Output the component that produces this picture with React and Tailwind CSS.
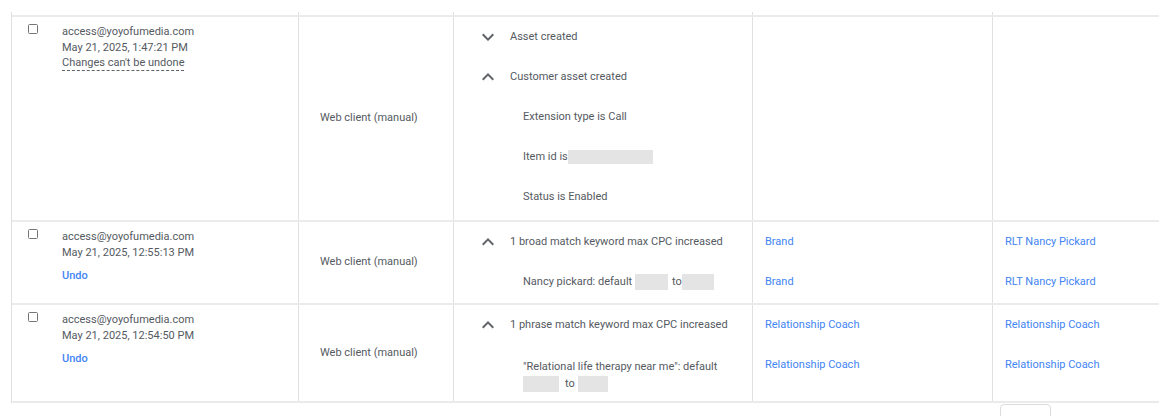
import React from 'react';

const ExpandMore = () => (
  <svg viewBox="0 0 24 24" className="w-6 h-6 fill-[#5f6368]">
    <path d="M16.59 8.59L12 13.17 7.41 8.59 6 10l6 6 6-6z" />
  </svg>
);

const ExpandLess = () => (
  <svg viewBox="0 0 24 24" className="w-6 h-6 fill-[#5f6368]">
    <path d="M12 8l-6 6 1.41 1.41L12 10.83l4.59 4.58L18 14z" />
  </svg>
);

const Redacted = ({ w, h = 'h-[16px]' }) => <span className={`inline-block align-middle bg-[#e4e4e4] ${w} ${h}`}></span>;

const Checkbox = () => <div className="w-[10px] h-[10px] mt-[2px] rounded-[1.5px] border border-[#757575] bg-white shrink-0"></div>;

const UserCell = ({ date, undoable }) => (
  <div className="border-r border-[#e0e0e0] flex pt-[5px] pl-[16px]">
    <Checkbox />
    <div className="ml-[24px] mt-[2px] leading-[16px]">
      <div>access@yoyofumedia.com</div>
      <div>{date}</div>
      {undoable ? (
        <div className="mt-[7px] text-[#4285f4] font-medium">Undo</div>
      ) : (
        <div className="leading-[14px]">
          <span className="border-b border-dashed border-[#5f6368] pb-[1px]">Changes can't be undone</span>
        </div>
      )}
    </div>
  </div>
);

const SourceCell = () => (
  <div className="border-r border-[#e0e0e0] flex items-center pl-[21px]">Web client (manual)</div>
);

const ChangeLine = ({ icon, children }) => (
  <div className="h-[40px] flex items-center">
    <div className="w-[56px] pl-[22px] flex items-center">{icon}</div>
    <div>{children}</div>
  </div>
);

const SubLine = ({ children, tall }) => (
  <div className={`${tall ? 'pt-[13px]' : 'h-[40px] flex items-center'} pl-[69px]`}>{children}</div>
);

const LinkCell = ({ items, last }) => (
  <div className={`${last ? '' : 'border-r border-[#e0e0e0]'} pl-[12px] text-[#4285f4]`}>
    {items.map((t, i) => (
      <div key={i} className="h-[40px] flex items-center">{t}</div>
    ))}
  </div>
);

const cols = 'grid grid-cols-[287px_155px_299px_240px_166px]';

export default function App() {
  return (
    <div className="w-[1176px] h-[416px] overflow-hidden bg-white font-['Roboto',sans-serif] text-[11px] text-[#555a5f]">
      <div className="pt-[12px] pl-[11px]">
        <div className="w-[1148px] border-l border-[#e0e0e0]">
          <div className={`${cols} h-[3px]`}>
            <div className="border-r border-[#e0e0e0]"></div>
            <div className="border-r border-[#e0e0e0]"></div>
            <div className="border-r border-[#e0e0e0]"></div>
            <div className="border-r border-[#e0e0e0]"></div>
            <div></div>
          </div>

          <div className={`${cols} h-[205px] border-t-2 border-[#ebebeb]`}>
            <UserCell date="May 21, 2025, 1:47:21 PM" />
            <SourceCell />
            <div className="border-r border-[#e0e0e0]">
              <ChangeLine icon={<ExpandMore />}>Asset created</ChangeLine>
              <ChangeLine icon={<ExpandLess />}>Customer asset created</ChangeLine>
              <SubLine>Extension type is Call</SubLine>
              <SubLine>
                Item id is<Redacted w="w-[85px]" h="h-[14px]" />
              </SubLine>
              <SubLine>Status is Enabled</SubLine>
            </div>
            <div className="border-r border-[#e0e0e0]"></div>
            <div></div>
          </div>

          <div className={`${cols} h-[83px] border-t-2 border-[#ebebeb]`}>
            <UserCell date="May 21, 2025, 12:55:13 PM" undoable />
            <SourceCell />
            <div className="border-r border-[#e0e0e0]">
              <ChangeLine icon={<ExpandLess />}>1 broad match keyword max CPC increased</ChangeLine>
              <SubLine>
                Nancy pickard: default&nbsp;<Redacted w="w-[33px]" />
                <span className="ml-[4px]">to</span>
                <Redacted w="w-[32px]" />
              </SubLine>
            </div>
            <LinkCell items={['Brand', 'Brand']} />
            <LinkCell items={['RLT Nancy Pickard', 'RLT Nancy Pickard']} last />
          </div>

          <div className={`${cols} h-[100px] border-y-2 border-[#ebebeb]`}>
            <UserCell date="May 21, 2025, 12:54:50 PM" undoable />
            <SourceCell />
            <div className="border-r border-[#e0e0e0]">
              <ChangeLine icon={<ExpandLess />}>1 phrase match keyword max CPC increased</ChangeLine>
              <SubLine tall>
                <div className="leading-[17px]">"Relational life therapy near me": default</div>
                <div className="leading-[17px] flex items-center">
                  <Redacted w="w-[36px]" />
                  <span className="ml-[6px]">to</span>
                  <Redacted w="w-[30px]" h="h-[16px] ml-[3px]" />
                </div>
              </SubLine>
            </div>
            <LinkCell items={['Relationship Coach', 'Relationship Coach']} />
            <LinkCell items={['Relationship Coach', 'Relationship Coach']} last />
          </div>
        </div>
        <div className="ml-[989px] mt-[1px] w-[51px] h-[24px] border border-[#dadce0] rounded-[4px]"></div>
      </div>
    </div>
  );
}
